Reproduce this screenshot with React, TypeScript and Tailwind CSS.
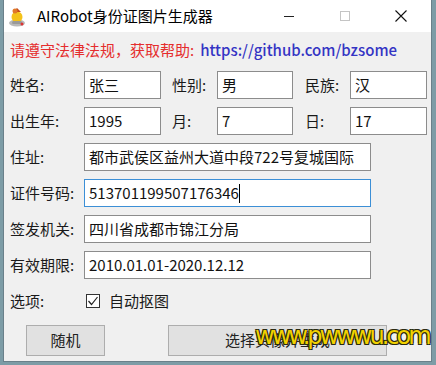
import React from 'react';

const font = "font-['Noto_Sans_CJK_SC','Noto_Sans',sans-serif]";

const Field: React.FC<{ value: string; w: string; focused?: boolean; caret?: boolean }> = ({ value, w, focused, caret }) => (
  <div
    className={`${w} h-[28px] bg-white border flex items-center pl-[4px] text-[15px] text-[#111] whitespace-nowrap overflow-hidden ${
      focused ? 'border-[#3c8fd6]' : 'border-[#8c8c8c]'
    }`}
  >
    {value}
    {caret && <span className="inline-block w-px h-[19px] bg-black" />}
  </div>
);

const Label: React.FC<{ text: string; w: string; ml?: string }> = ({ text, w, ml = '' }) => (
  <div className={`${w} ${ml} text-[15px] text-[#1a1a1a] whitespace-nowrap`}>{text}</div>
);

export default function App() {
  return (
    <div className={`w-[436px] h-[365px] bg-[#7d9ca6] relative overflow-hidden ${font}`}>
      <div className="ml-[3px] w-[429px] h-[362px] border-x border-b border-[#6a808a] bg-[#f0f0f0] flex flex-col">
        {/* title bar */}
        <div className="h-[32px] bg-white flex items-center shrink-0">
          <svg width="18" height="20" viewBox="0 0 18 20" className="ml-[4px] mt-[2px]">
            <ellipse cx="9" cy="16" rx="8" ry="3.5" fill="#b9b9b9" />
            <circle cx="9" cy="10" r="5.5" fill="#f4c21a" />
            <path d="M5 5 L9 1 L13 5 Z" fill="#c44a1a" />
            <circle cx="7" cy="4" r="2.5" fill="#e0782a" />
            <rect x="4" y="14" width="10" height="3" rx="1.5" fill="#9a9a9a" />
            <circle cx="14" cy="17" r="1.5" fill="#d33" />
          </svg>
          <span className="ml-[11px] text-[15px] text-black">AIRobot身份证图片生成器</span>
          <div className="ml-auto flex items-center h-full">
            <div className="w-[56px] h-full flex items-center justify-center">
              <div className="w-[10px] h-px bg-[#222]" />
            </div>
            <div className="w-[56px] h-full flex items-center justify-center">
              <div className="w-[10px] h-[10px] border border-[#c4c4c4]" />
            </div>
            <div className="w-[56px] h-full flex items-center justify-center mr-[2px]">
              <svg width="12" height="12" viewBox="0 0 12 12">
                <path d="M0.5 0.5 L11.5 11.5 M11.5 0.5 L0.5 11.5" stroke="#111" strokeWidth="1.1" />
              </svg>
            </div>
          </div>
        </div>

        {/* body */}
        <div className="flex flex-col pl-[6px]">
          <div className="mt-[8px] h-[20px] flex items-center text-[15px] whitespace-nowrap">
            <span className="text-[#e52d2d]">请遵守法律法规，获取帮助:</span>
            <span className="ml-[6px] text-[#3434c4] font-medium">https://github.com/bzsome</span>
          </div>

          <div className="mt-[11px] flex items-center">
            <Label text="姓名:" w="w-[74px]" />
            <Field value="张三" w="w-[77px]" />
            <Label text="性别:" w="w-[45px]" ml="ml-[11px]" />
            <Field value="男" w="w-[76px]" />
            <Label text="民族:" w="w-[45px]" ml="ml-[12px]" />
            <Field value="汉" w="w-[77px]" />
          </div>

          <div className="mt-[8px] flex items-center">
            <Label text="出生年:" w="w-[74px]" />
            <Field value="1995" w="w-[77px]" />
            <Label text="月:" w="w-[45px]" ml="ml-[11px]" />
            <Field value="7" w="w-[76px]" />
            <Label text="日:" w="w-[45px]" ml="ml-[12px]" />
            <Field value="17" w="w-[77px]" />
          </div>

          <div className="mt-[8px] flex items-center">
            <Label text="住址:" w="w-[74px]" />
            <Field value="都市武侯区益州大道中段722号复城国际" w="w-[287px]" />
          </div>

          <div className="mt-[8px] flex items-center">
            <Label text="证件号码:" w="w-[74px]" />
            <Field value="513701199507176346" w="w-[287px]" focused caret />
          </div>

          <div className="mt-[8px] flex items-center">
            <Label text="签发机关:" w="w-[74px]" />
            <Field value="四川省成都市锦江分局" w="w-[287px]" />
          </div>

          <div className="mt-[8px] flex items-center">
            <Label text="有效期限:" w="w-[74px]" />
            <Field value="2010.01.01-2020.12.12" w="w-[287px]" />
          </div>

          <div className="mt-[8px] h-[28px] flex items-center">
            <Label text="选项:" w="w-[76px]" />
            <div className="w-[14px] h-[14px] border border-[#333] bg-white flex items-center justify-center">
              <svg width="12" height="12" viewBox="0 0 12 12">
                <path d="M1.5 6 L4.5 9.5 L10.5 2" fill="none" stroke="#222" strokeWidth="1.2" />
              </svg>
            </div>
            <span className="ml-[9px] text-[15px] text-[#1a1a1a]">自动抠图</span>
          </div>

          <div className="mt-[10px] flex items-center">
            <div className="ml-[16px] w-[79px] h-[31px] bg-[#e1e1e1] border border-[#adadad] flex items-center justify-center text-[15px] text-[#222]">
              随机
            </div>
            <div className="ml-[63px] w-[219px] h-[31px] bg-[#e1e1e1] border border-[#adadad] flex items-center justify-center text-[15px] text-[#222]">
              选择头像并生成
            </div>
          </div>
        </div>
      </div>

      <div className="absolute left-[255px] top-[321px] text-[24px] leading-[30px] tracking-[-3px] text-[#f2d200] font-['DejaVu_Sans',sans-serif] [text-shadow:1px_1px_0_#2a2a10,-1px_-1px_0_#2a2a10,1px_-1px_0_#2a2a10,-1px_1px_0_#2a2a10] whitespace-nowrap">
        www.pwwwu.com
      </div>
    </div>
  );
}
